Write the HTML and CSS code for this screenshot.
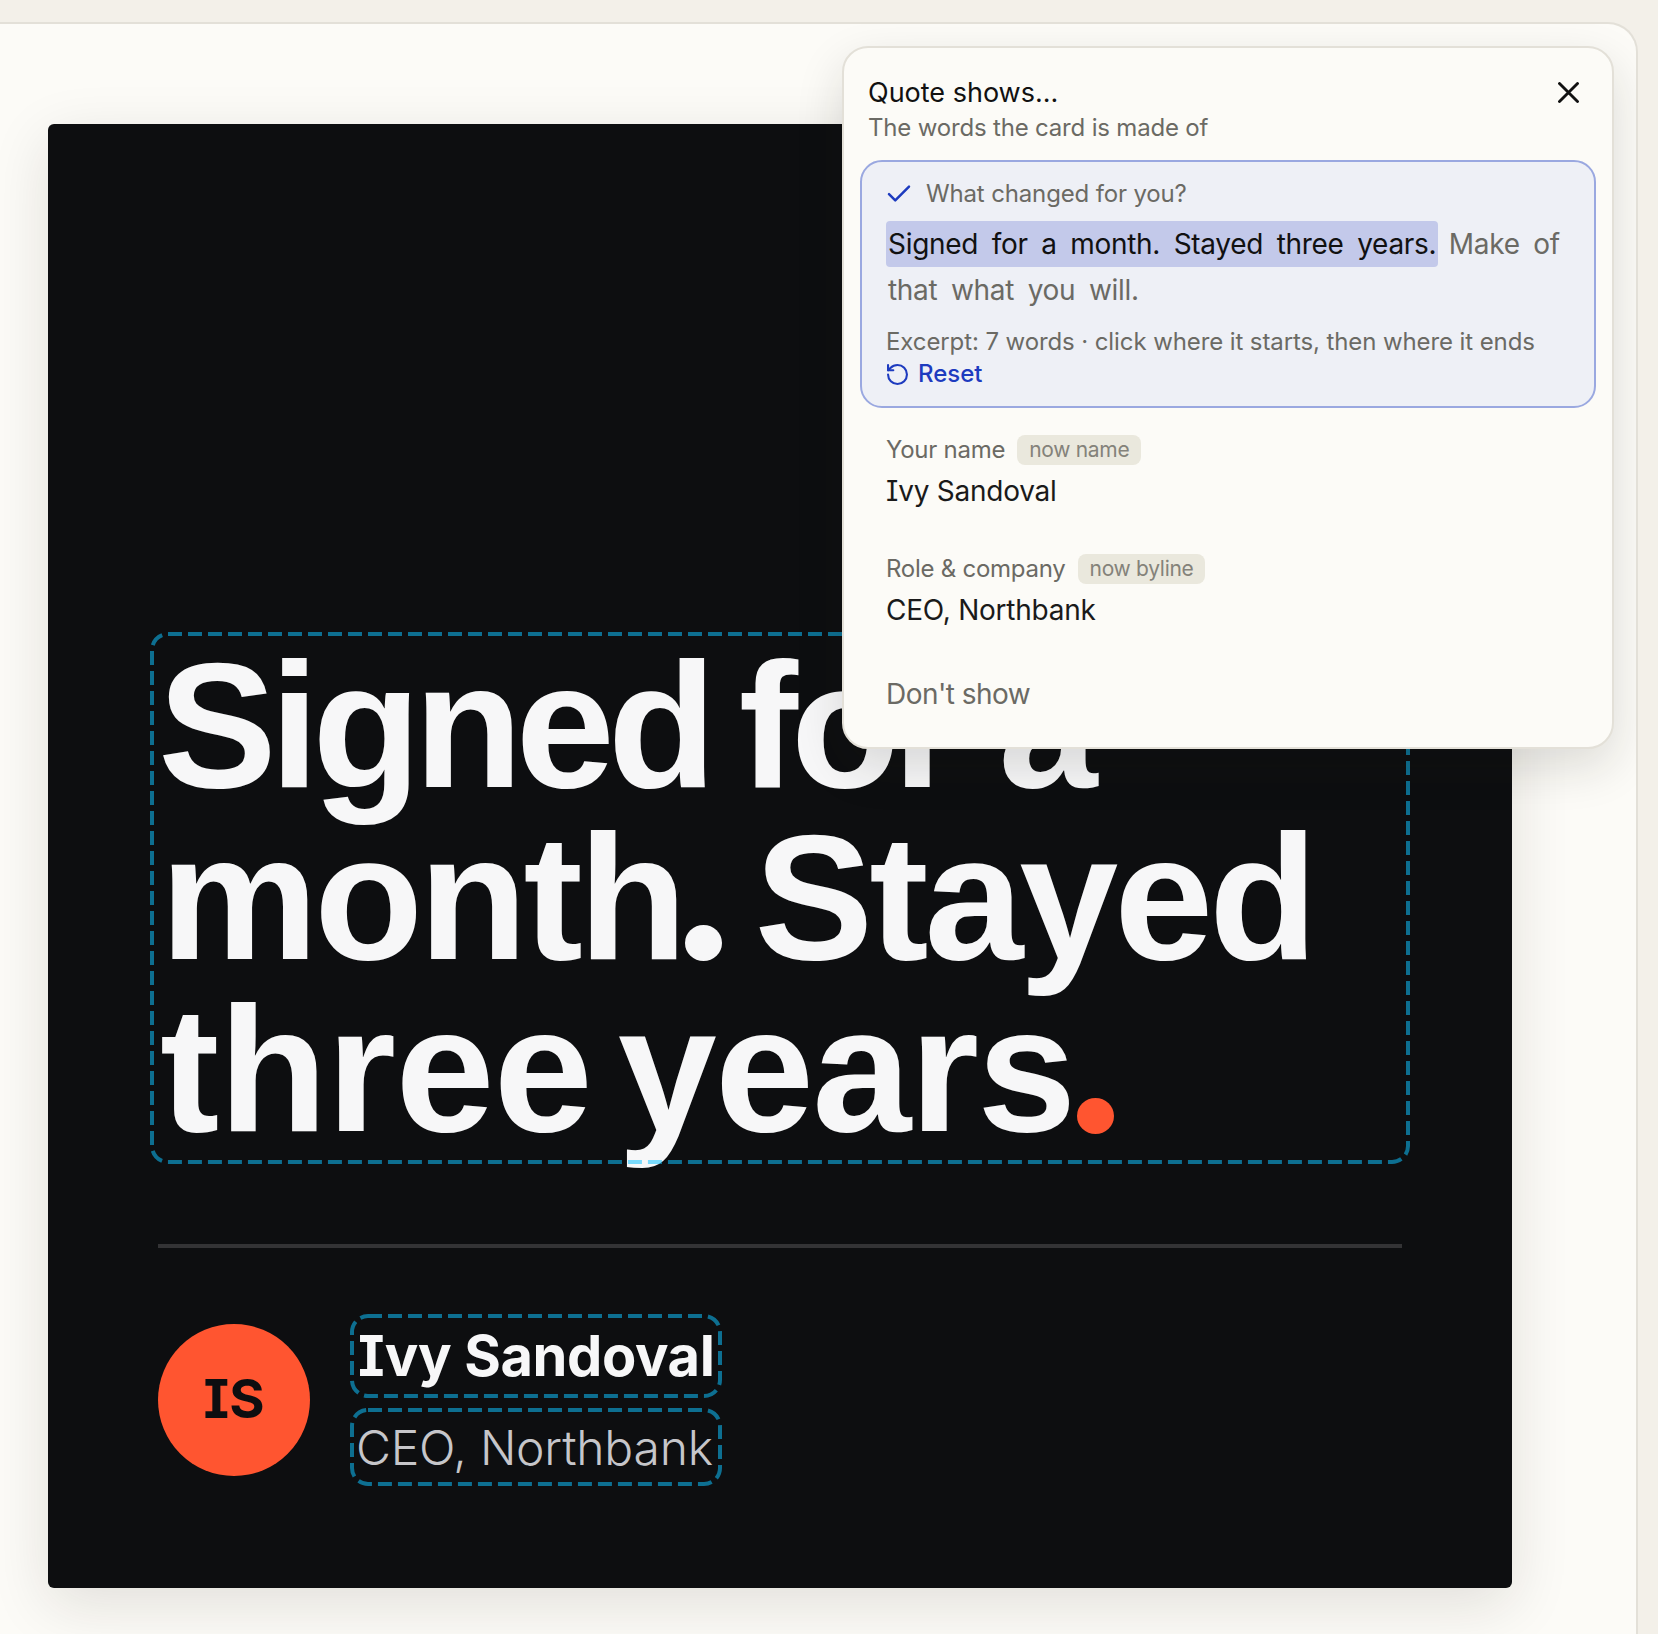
FILE: index.html
```html
<!DOCTYPE html>
<html lang="en">
<head>
<meta charset="utf-8">
<title>Quote card</title>
<link rel="stylesheet" href="styles.css">
</head>
<body>
<main class="panel">
  <article class="card">
    <div class="slot quote">
      <h1 class="headline"><span class="ls-tight">Signed for</span> <span class="ls-a">a</span> <span class="ls-mid">month<span class="stop">.</span> Stayed</span> <span class="ls-wide">three</span> <span class="ls-years">years</span><span class="stop stop-accent">.</span></h1>
      <svg class="dash" aria-hidden="true"><rect class="dash-r"></rect></svg>
    </div>
    <hr class="rule">
    <div class="author">
      <div class="avatar">IS</div>
      <div class="byline">
        <div class="slot name-slot"><span class="name">Ivy Sandoval</span><svg class="dash" aria-hidden="true"><rect class="dash-r"></rect></svg></div>
        <div class="slot role-slot"><span class="role">CEO, Northbank</span><svg class="dash" aria-hidden="true"><rect class="dash-r"></rect></svg></div>
      </div>
    </div>
  </article>

  <aside class="pop">
    <header class="pop-head">
      <div>
        <div class="pop-title">Quote shows...</div>
        <div class="pop-sub">The words the card is made of</div>
      </div>
      <svg class="close" viewBox="5 5 14 14" fill="none" stroke="currentColor" stroke-width="1.9" stroke-linecap="round"><path d="M18 6 6 18M6 6l12 12"/></svg>
    </header>
    <section class="opt">
      <div class="opt-q">
        <svg class="check" viewBox="4 6 16 11" fill="none" stroke="currentColor" stroke-width="2" stroke-linecap="round" stroke-linejoin="round"><path d="M20 6 9 17l-5-5"/></svg>
        <span>What changed for you?</span>
      </div>
      <p class="answer"><span class="sel">Signed for a month. Stayed three years.</span> Make of <span class="rest">that what you will.</span></p>
      <div class="hint">Excerpt: 7 words · click where it starts, then where it ends</div>
      <div class="reset">
        <svg class="reset-i" viewBox="2 2 20 20" fill="none" stroke="currentColor" stroke-width="2" stroke-linecap="round" stroke-linejoin="round"><path d="M3 12a9 9 0 1 0 9-9 9.75 9.75 0 0 0-6.74 2.74L3 8"/><path d="M3 3v5h5"/></svg>
        <span>Reset</span>
      </div>
    </section>
    <section class="row row-name">
      <div class="row-label"><span>Your name</span><span class="chip">now name</span></div>
      <div class="row-val">Ivy Sandoval</div>
    </section>
    <section class="row row-role">
      <div class="row-label"><span>Role &amp; company</span><span class="chip">now byline</span></div>
      <div class="row-val">CEO, Northbank</div>
    </section>
    <div class="dont">Don't show</div>
  </aside>
</main>
</body>
</html>
```
FILE: styles.css
```css
* { box-sizing: border-box; }
html, body { margin: 0; height: 100%; }
body {
  background: #f3f0e9;
  padding-top: 22px;
  overflow: hidden;
  font-family: "Inter", "Liberation Sans", sans-serif;
  font-feature-settings: "cv08" 1;
}
.panel {
  position: relative;
  width: 1638px;
  height: 1612px;
  padding: 100px 0 0 48px;
  background: #fcfbf7;
  border-top: 2px solid #e3e0d8;
  border-right: 2px solid #e3e0d8;
  border-top-right-radius: 30px;
  overflow: hidden;
}
.card {
  display: flex;
  flex-direction: column;
  justify-content: flex-end;
  width: 1464px;
  height: 1464px;
  padding: 0 102px 102px;
  background: #0d0e10;
  color: #f7f7f8;
  border-radius: 6px;
  box-shadow: 0 16px 60px rgba(30, 28, 20, .12);
}
.slot { position: relative; }
.dash {
  position: absolute;
  inset: 0;
  width: 100%;
  height: 100%;
  pointer-events: none;
  overflow: visible;
}
.dash-r {
  x: 2px;
  y: 2px;
  width: calc(100% - 4px);
  height: calc(100% - 4px);
  rx: 16px;
  ry: 16px;
  fill: none;
  stroke: rgba(14, 194, 255, .54);
  stroke-width: 4px;
  stroke-dasharray: 14 6;
}
.quote { padding: 8px 8px 8px 10px; }
.headline {
  margin: 0;
  font-family: "Liberation Sans", sans-serif;
  font-size: 178px;
  line-height: 172px;
  font-weight: 700;
  word-spacing: -13px;
}
.ls-tight { letter-spacing: -7px; margin-left: -2px; }
.ls-a { margin-left: 7px; }
.ls-mid { letter-spacing: -4.1px; }
.ls-wide { letter-spacing: -.6px; }
.ls-years { letter-spacing: -1.7px; margin-left: -11px; }
.stop {
  display: inline-block;
  width: 37px;
  height: 36px;
  margin: 0 0 0 2px;
  vertical-align: -2px;
  overflow: hidden;
  border-radius: 50%;
  background: #f7f7f8;
  font-size: 60px;
  line-height: 36px;
  text-align: center;
  color: transparent;
}
.stop-accent { margin-left: 2px; vertical-align: -3px; background: #ff5530; }
.rule {
  margin: 80px 8px 66px;
  height: 4px;
  border: 0;
  background: #333335;
}
.author {
  display: flex;
  align-items: center;
  gap: 40px;
  margin-left: 8px;
}
.avatar {
  display: flex;
  align-items: center;
  justify-content: center;
  width: 152px;
  height: 152px;
  padding-bottom: 4px;
  border-radius: 50%;
  background: #ff5530;
  color: #0d0e10;
  font-size: 54px;
  font-weight: 700;
}
.byline {
  display: flex;
  flex-direction: column;
  gap: 10px;
  width: 372px;
}
.name-slot, .role-slot {
  display: flex;
  align-items: center;
  padding: 0 8px;
}
.role-slot { padding-left: 6px; }
.name-slot { height: 84px; }
.role-slot { height: 78px; }
.name { font-size: 56px; font-weight: 700; letter-spacing: -.4px; color: #f7f7f8; white-space: nowrap; }
.role { font-size: 48px; font-weight: 300; letter-spacing: -.2px; color: #c6c6ca; white-space: nowrap; }

.pop {
  position: absolute;
  top: 22px;
  left: 842px;
  width: 772px;
  height: 703px;
  padding: 0 16px;
  background: #fcfbf7;
  border: 2px solid #e3e0d8;
  border-radius: 26px;
  box-shadow: 0 18px 48px rgba(30, 28, 20, .14);
  color: #111;
}
.pop-head {
  display: flex;
  justify-content: space-between;
  padding: 28px 17px 0 8px;
}
.pop-title { font-size: 27px; line-height: 34px; font-weight: 400; }
.pop-sub { font-size: 24px; line-height: 36px; letter-spacing: -.18px; color: #6b6a64; }
.close { width: 21px; height: 21px; margin: 6px 0 0; color: #111; }
.opt {
  margin-top: 14px;
  height: 248px;
  padding: 17px 24px 0;
  background: #eef0f6;
  border: 2px solid #9aa8e0;
  border-radius: 22px;
  color: #6b6a64;
}
.opt-q { display: flex; align-items: center; gap: 17px; font-size: 24px; line-height: 30px; letter-spacing: -.15px; padding-left: 3px; }
.check { width: 20px; height: 15px; margin-bottom: 2px; color: #1d3bbf; overflow: visible; }
.answer {
  margin: 12px 0 0;
  font-size: 28px;
  line-height: 46px;
  letter-spacing: -.3px;
  word-spacing: 6px;
}
.sel { margin-right: -3px; padding: 6px 2px; background: #c3c9ea; color: #111; border-radius: 4px; }
.rest { display: inline-block; padding-left: 2px; }
.hint { margin-top: 13px; font-size: 24px; line-height: 32px; letter-spacing: -.1px; }
.reset { display: flex; align-items: center; gap: 10px; color: #1d3bbf; font-size: 24px; line-height: 32px; font-weight: 500; }
.reset-i { width: 21px; height: 21px; margin-left: 1px; }
.row { padding: 0 26px; }
.row-name { margin-top: 27px; }
.row-role { margin-top: 43px; }
.row-label { display: flex; align-items: center; gap: 12px; font-size: 24px; line-height: 30px; letter-spacing: -.25px; color: #6b6a64; }
.chip { padding: 0 12px; font-size: 21px; line-height: 30px; letter-spacing: -.3px; background: #eae8dd; color: #84827a; border-radius: 8px; }
.row-val { margin-top: 6px; font-size: 28px; line-height: 40px; letter-spacing: -.25px; color: #1a1a1a; }
.dont { margin: 44px 0 0; padding: 0 26px; font-size: 28px; line-height: 40px; letter-spacing: -.55px; color: #6b6a64; }
```
